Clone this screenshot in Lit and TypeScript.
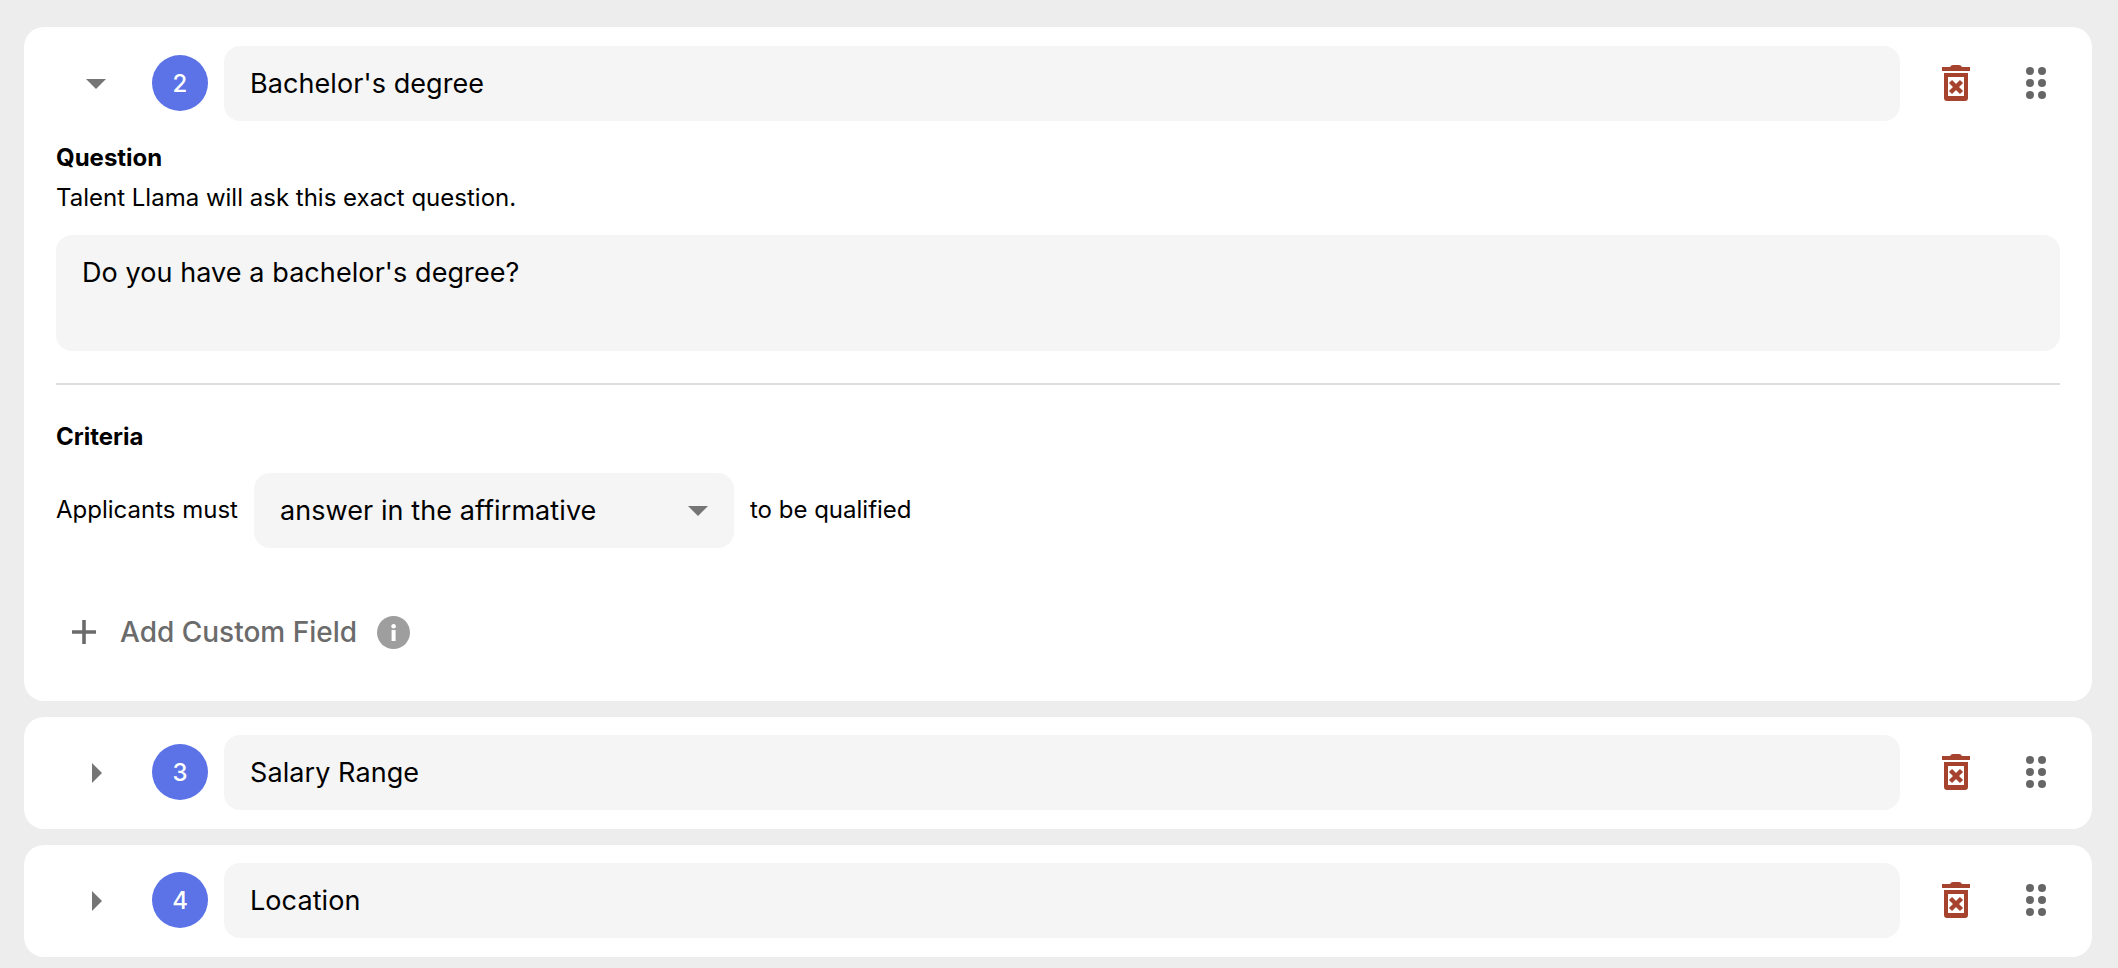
import { LitElement, html, css, svg } from "lit";
import { customElement } from "lit/decorators.js";

const trash = html`<svg class="trash" width="28" height="36" viewBox="0 0 28 36" aria-hidden="true">
  <path fill="#a5432e" d="M8 2 Q9 0 11 0 H17 Q19 0 20 2 H28 V6 H0 V2 Z"/>
  <path fill="#a5432e" fill-rule="evenodd" d="M2 8 H26 V33 Q26 36 23 36 H5 Q2 36 2 33 Z M6 12 V31 H22 V12 Z"/>
  <path stroke="#a5432e" stroke-width="4.4" d="M8.5 16.5 L19.5 27.5 M19.5 16.5 L8.5 27.5" fill="none"/>
</svg>`;

const dots = html`<svg class="dots" width="20" height="32" viewBox="0 0 20 32" aria-hidden="true">
  ${[4, 16, 28].map((y) => [4, 16].map((x) => svg`<circle cx=${x} cy=${y} r="4" fill="#666"/>`))}
</svg>`;

const caretDown = html`<svg width="20" height="10" viewBox="0 0 20 10" aria-hidden="true"><path d="M0 0 H20 L10 10 Z" fill="#757575"/></svg>`;
const caretRight = html`<svg class="caret-right" width="10" height="20" viewBox="0 0 10 20" aria-hidden="true"><path d="M0 0 L10 10 L0 20 Z" fill="#757575"/></svg>`;

@customElement("app-root")
export class AppRoot extends LitElement {
  static styles = css`
    :host {
      display: block;
      height: 968px;
      overflow: hidden;
      box-sizing: border-box;
      padding: 27px 26px 0 24px;
      background: #ededed;
      font-family: Inter, "Liberation Sans", sans-serif;
      color: #000;
    }
    .list { display: flex; flex-direction: column; gap: 16px; }
    .card { background: #fff; border-radius: 20px; padding: 18px 32px 19px 32px; }
    .card.open { padding-top: 19px; padding-bottom: 0; height: 674px; box-sizing: border-box; }
    .head { display: flex; align-items: center; }
    .toggle-box { width: 128px; margin-left: -32px; margin-top: 1px; padding-left: 16px; display: flex; justify-content: center; box-sizing: border-box; flex: none; }
    .caret-right { margin-left: 2px; }
    .badge {
      width: 56px; height: 56px; border-radius: 50%; background: #5b73e6; color: #fff;
      display: flex; align-items: center; justify-content: center;
      font-size: 24px; font-weight: 500; flex: none; margin-top: -1px;
    }
    .field {
      background: #f5f5f5; border-radius: 16px; height: 75px; box-sizing: border-box;
      display: flex; align-items: center; padding: 0 26px; font-size: 27px; letter-spacing: 0.08px;
    }
    .title { flex: 1; margin-left: 16px; }
    .trash-box { margin-left: 42px; margin-top: -1px; width: 28px; display: flex; flex: none; }
    .dots-box { margin-left: 56px; margin-right: 14px; margin-top: -1px; width: 20px; display: flex; flex: none; }
    .label { font-size: 24px; font-weight: 700; line-height: 28px; }
    .q-label { margin-top: 23px; }
    .hint { font-size: 24px; line-height: 28px; margin-top: 12px; }
    .area {
      margin-top: 23px; height: 116px; background: #f5f5f5; border-radius: 16px; box-sizing: border-box;
      padding: 20px 26px; font-size: 27px; letter-spacing: 0.08px; line-height: 36px;
    }
    .rule { height: 2px; background: #dedede; margin-top: 32px; }
    .c-label { margin-top: 38px; }
    .row { display: flex; align-items: center; gap: 16px; margin-top: 22px; font-size: 24px; }
    .row-text { padding-bottom: 2px; }
    .select { width: 480px; justify-content: space-between; padding-right: 26px; }
    .add { display: flex; align-items: center; margin-top: 67px; color: #6b6b6b; font-size: 28px; font-weight: 500; }
    .plus { margin-left: 16px; margin-right: 24px; display: flex; }
    .info { margin-left: 20px; display: flex; }
  `;

  private row(n: number, title: string, open: boolean) {
    return html`<div class="head">
      <div class="toggle-box">${open ? caretDown : caretRight}</div>
      <div class="badge">${n}</div>
      <div class="field title">${title}</div>
      <div class="trash-box">${trash}</div>
      <div class="dots-box">${dots}</div>
    </div>`;
  }

  render() {
    return html`<div class="list">
      <section class="card open">
        ${this.row(2, "Bachelor's degree", true)}
        <div class="body">
          <div class="label q-label">Question</div>
          <div class="hint">Talent Llama will ask this exact question.</div>
          <div class="area">Do you have a bachelor's degree?</div>
          <div class="rule"></div>
          <div class="label c-label">Criteria</div>
          <div class="row">
            <span class="row-text">Applicants must</span>
            <div class="field select"><span>answer in the affirmative</span>${caretDown}</div>
            <span class="row-text">to be qualified</span>
          </div>
          <div class="add">
            <span class="plus"><svg width="24" height="24" viewBox="0 0 24 24" aria-hidden="true"><path d="M12 0 V24 M0 12 H24" stroke="#6b6b6b" stroke-width="3.6" fill="none"/></svg></span>
            <span>Add Custom Field</span>
            <span class="info"><svg width="33" height="33" viewBox="0 0 33 33" aria-hidden="true"><circle cx="16.5" cy="16.5" r="16.5" fill="#9e9e9e"/><rect x="14.6" y="14" width="4" height="11" fill="#fff"/><circle cx="16.6" cy="10.2" r="2.3" fill="#fff"/></svg></span>
          </div>
        </div>
      </section>
      <section class="card">${this.row(3, "Salary Range", false)}</section>
      <section class="card">${this.row(4, "Location", false)}</section>
    </div>`;
  }
}
